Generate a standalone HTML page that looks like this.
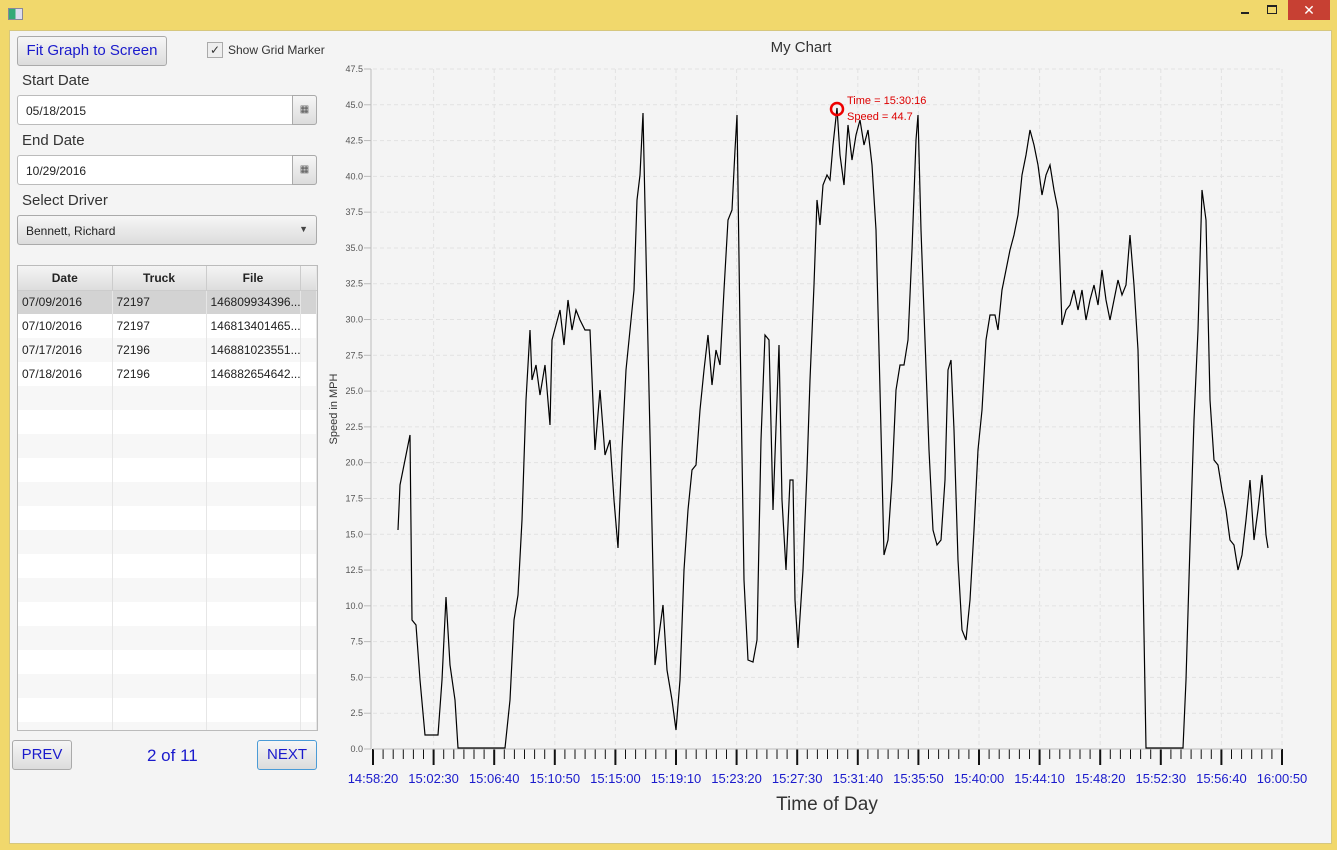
<!DOCTYPE html><html><head><style>
body{margin:0;width:1337px;height:850px;background:#f1d86c;font-family:"Liberation Sans",sans-serif;position:relative;overflow:hidden}
.a{position:absolute}
#c{left:9px;top:30px;width:1321px;height:812px;background:#f4f4f4;border:1px solid #d6c77e}
.btn{background:linear-gradient(#f6f6f6,#dcdcdc);border:1px solid #aaa;border-radius:3px;box-sizing:border-box}
.lbl{font-size:15px;color:#333}
.inp{background:#fff;border:1px solid #bbb;border-radius:3px;box-sizing:border-box;font-size:12px;color:#222;padding:8px 8px}
table{border-collapse:collapse;font-size:12px;color:#222}
td{height:24px;box-sizing:border-box;border-right:1px solid #e6e6e6;padding:0 4px;white-space:nowrap;overflow:hidden}
</style></head><body>
<div class="a" style="left:8px;top:8px;width:13px;height:10px;border:1px solid #889;background:linear-gradient(90deg,#3a7 50%,#dde 50%)"></div>
<div class="a" style="left:1241px;top:12px;width:8px;height:2px;background:#222"></div>
<div class="a" style="left:1267px;top:5px;width:8px;height:6px;border:1px solid #222;border-top-width:2px"></div>
<div class="a" style="left:1288px;top:0;width:42px;height:20px;background:#c74033;color:#fff;font-size:14px;text-align:center;line-height:20px">✕</div>
<div id="c" class="a"></div>
<div class="a btn" style="left:17px;top:36px;width:150px;height:30px;color:#1a1acc;font-size:15px;text-align:center;line-height:28px">Fit Graph to Screen</div>
<div class="a" style="left:207px;top:42px;width:14px;height:14px;border:1px solid #aaa;background:#eee;font-size:12px;line-height:14px;text-align:center;color:#333">✓</div>
<div class="a" style="left:228px;top:43px;font-size:12px;color:#333">Show Grid Marker</div>
<div class="a lbl" style="left:22px;top:72px">Start Date</div>
<div class="a inp" style="left:17px;top:95px;width:300px;height:30px">05/18/2015</div>
<div class="a btn" style="left:292px;top:95px;width:25px;height:30px;border-radius:0 3px 3px 0;font-size:10px;text-align:center;line-height:28px;color:#555">▦</div>
<div class="a lbl" style="left:22px;top:132px">End Date</div>
<div class="a inp" style="left:17px;top:155px;width:300px;height:30px">10/29/2016</div>
<div class="a btn" style="left:292px;top:155px;width:25px;height:30px;border-radius:0 3px 3px 0;font-size:10px;text-align:center;line-height:28px;color:#555">▦</div>
<div class="a lbl" style="left:22px;top:192px">Select Driver</div>
<div class="a btn" style="left:17px;top:215px;width:300px;height:30px;font-size:12px;padding:8px;color:#222">Bennett, Richard<span style="position:absolute;right:8px;top:8px;font-size:9px;color:#444">▼</span></div>
<div class="a" style="left:17px;top:265px;width:299px;height:464px;border:1px solid #bbb;background:#fff;overflow:hidden">
<table style="width:299px;table-layout:fixed">
<tr style="background:linear-gradient(#f4f4f4,#ddd);font-weight:bold;text-align:center"><td style="width:94px;border-right:1px solid #ccc;border-bottom:1px solid #ccc">Date</td><td style="width:94px;border-right:1px solid #ccc;border-bottom:1px solid #ccc">Truck</td><td style="width:94px;border-right:1px solid #ccc;border-bottom:1px solid #ccc">File</td><td style="border-bottom:1px solid #ccc"></td></tr>
<tr style="background:#d3d3d3"><td>07/09/2016</td><td>72197</td><td>146809934396...</td><td></td></tr>
<tr><td>07/10/2016</td><td>72197</td><td>146813401465...</td><td></td></tr>
<tr style="background:#f7f7f7"><td>07/17/2016</td><td>72196</td><td>146881023551...</td><td></td></tr>
<tr><td>07/18/2016</td><td>72196</td><td>146882654642...</td><td></td></tr>
<tr style="background:#f7f7f7"><td></td><td></td><td></td><td></td></tr><tr><td></td><td></td><td></td><td></td></tr>
<tr style="background:#f7f7f7"><td></td><td></td><td></td><td></td></tr><tr><td></td><td></td><td></td><td></td></tr>
<tr style="background:#f7f7f7"><td></td><td></td><td></td><td></td></tr><tr><td></td><td></td><td></td><td></td></tr>
<tr style="background:#f7f7f7"><td></td><td></td><td></td><td></td></tr><tr><td></td><td></td><td></td><td></td></tr>
<tr style="background:#f7f7f7"><td></td><td></td><td></td><td></td></tr><tr><td></td><td></td><td></td><td></td></tr>
<tr style="background:#f7f7f7"><td></td><td></td><td></td><td></td></tr><tr><td></td><td></td><td></td><td></td></tr>
<tr style="background:#f7f7f7"><td></td><td></td><td></td><td></td></tr><tr><td></td><td></td><td></td><td></td></tr>
<tr style="background:#f7f7f7"><td></td><td></td><td></td><td></td></tr>
</table></div>
<div class="a btn" style="left:12px;top:740px;width:60px;height:30px;color:#1a1acc;font-size:15px;text-align:center;line-height:28px">PREV</div>
<div class="a" style="left:147px;top:746px;color:#1a1acc;font-size:17px">2 of 11</div>
<div class="a btn" style="left:257px;top:740px;width:60px;height:30px;color:#1a1acc;font-size:15px;text-align:center;line-height:28px;border-color:#4a9bd6">NEXT</div>
<svg class="a" style="left:0;top:0" width="1337" height="850" font-family="Liberation Sans,sans-serif">
<text x="801" y="52" font-size="15" fill="#333" text-anchor="middle">My Chart</text>
<text x="337" y="409" font-size="11" fill="#333" text-anchor="middle" transform="rotate(-90 337 409)">Speed in MPH</text>
<text x="827" y="810" font-size="19" fill="#333" text-anchor="middle">Time of Day</text>
<g id="grid" stroke="#e2e2e2" stroke-dasharray="4,3"></g>
<g id="yl" font-size="9" fill="#555" text-anchor="end"></g>
<g id="xt" stroke="#111"></g>
<g id="xl" font-size="13" fill="#1a1acc" text-anchor="middle"></g>
<line x1="371" y1="69" x2="371" y2="749" stroke="#bbb"/>
<line x1="373" y1="749" x2="1282" y2="749" stroke="#bbb"/>
<polyline fill="none" stroke="#000" stroke-width="1.2" points="398,530 400,485 405,460 410,435 412,620 416,625 420,680 425,735 438,735 442,680 446,597 450,665 455,700 458,748 505,748 510,700 514,620 518,595 522,520 526,400 530,330 532,380 536,365 540,395 545,365 550,425 552,340 556,325 560,310 564,345 568,300 572,330 576,310 580,320 585,330 590,330 595,450 600,390 605,455 610,440 614,500 618,548 622,450 626,370 630,330 634,290 637,200 640,175 643,113 647,300 651,480 655,665 659,635 663,605 667,670 672,700 676,730 680,680 684,570 688,510 692,470 696,465 700,410 704,370 708,335 712,385 716,350 720,365 724,290 728,220 732,210 735,150 737,115 740,330 744,580 748,660 753,662 757,640 761,440 765,335 769,340 773,510 777,400 779,345 782,500 786,570 790,480 793,480 795,600 798,648 803,570 807,470 810,380 814,285 817,200 820,225 823,185 827,175 830,180 833,145 837,108 840,155 844,185 848,125 852,160 856,135 860,120 864,145 868,130 872,165 876,230 880,390 884,555 888,540 892,480 896,390 900,365 904,365 908,340 912,250 916,140 918,115 921,230 925,340 929,450 933,530 937,545 941,540 945,480 948,370 951,360 954,430 958,560 962,630 966,640 970,600 974,530 978,450 982,410 986,340 990,315 995,315 998,330 1002,290 1006,270 1010,250 1014,235 1018,215 1022,175 1026,155 1030,130 1034,145 1038,165 1042,195 1046,175 1050,165 1054,190 1058,210 1062,325 1066,310 1070,305 1074,290 1078,310 1082,290 1086,320 1090,300 1094,285 1098,305 1102,270 1106,300 1110,320 1114,300 1118,280 1122,295 1126,285 1130,235 1134,285 1138,350 1142,520 1146,748 1183,748 1186,680 1190,545 1194,420 1198,330 1202,190 1206,220 1210,400 1214,460 1218,465 1222,490 1226,510 1230,540 1234,545 1238,570 1242,555 1246,520 1250,480 1254,540 1258,510 1262,475 1266,535 1268,548"/>
<circle cx="837" cy="109" r="6" fill="none" stroke="#e00" stroke-width="2.5"/>
<text x="847" y="104" font-size="11" fill="#d00">Time = 15:30:16</text>
<text x="847" y="120" font-size="11" fill="#d00">Speed = 44.7</text>
</svg>
<script>
var ns="http://www.w3.org/2000/svg";function el(p,t,a,tx){var e=document.createElementNS(ns,t);for(var k in a)e.setAttribute(k,a[k]);if(tx)e.textContent=tx;document.getElementById(p).appendChild(e);}
var labs=["14:58:20","15:02:30","15:06:40","15:10:50","15:15:00","15:19:10","15:23:20","15:27:30","15:31:40","15:35:50","15:40:00","15:44:10","15:48:20","15:52:30","15:56:40","16:00:50"];
for(var i=0;i<=19;i++){var y=749-i*35.79;el("grid","line",{x1:373,x2:1282,y1:y,y2:y});el("yl","text",{x:363,y:y+3},(i*2.5).toFixed(1));el("yl","line",{x1:364,x2:371,y1:y,y2:y,stroke:"#bbb"});}
for(var i=0;i<16;i++){var x=373+i*60.6;if(i>0)el("grid","line",{x1:x,x2:x,y1:69,y2:749});el("xl","text",{x:x,y:783},labs[i]);el("xt","line",{x1:x,x2:x,y1:749,y2:765,"stroke-width":2});if(i<15)for(var j=1;j<6;j++){var xx=x+j*10.1;el("xt","line",{x1:xx,x2:xx,y1:749,y2:759});}}
</script>
</body></html>
